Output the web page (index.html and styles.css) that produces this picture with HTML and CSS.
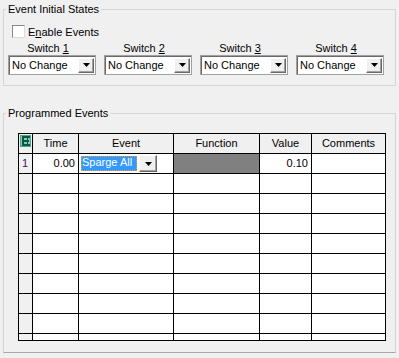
FILE: index.html
```html
<!DOCTYPE html>
<html lang="en">

<head>
    <meta charset="UTF-8" />
    <title>Event Settings</title>
    <link rel="stylesheet" href="styles.css">
</head>

<body>
    <fieldset class="group group-initial">
        <legend>Event Initial States</legend>
        <label class="check-row"><span class="checkbox"></span>E<u>n</u>able Events</label>

        <div class="switches">
            <div class="switch">
                <div class="switch-label">Switch <u>1</u></div>
                <div class="combo"><span class="combo-text">No Change</span><span class="combo-btn"><svg width="7" height="4" viewBox="0 0 7 4"><polygon points="0,0 7,0 3.5,4" fill="#000"/></svg></span></div>
            </div>
            <div class="switch">
                <div class="switch-label">Switch <u>2</u></div>
                <div class="combo"><span class="combo-text">No Change</span><span class="combo-btn"><svg width="7" height="4" viewBox="0 0 7 4"><polygon points="0,0 7,0 3.5,4" fill="#000"/></svg></span></div>
            </div>
            <div class="switch">
                <div class="switch-label">Switch <u>3</u></div>
                <div class="combo"><span class="combo-text">No Change</span><span class="combo-btn"><svg width="7" height="4" viewBox="0 0 7 4"><polygon points="0,0 7,0 3.5,4" fill="#000"/></svg></span></div>
            </div>
            <div class="switch">
                <div class="switch-label">Switch <u>4</u></div>
                <div class="combo"><span class="combo-text">No Change</span><span class="combo-btn"><svg width="7" height="4" viewBox="0 0 7 4"><polygon points="0,0 7,0 3.5,4" fill="#000"/></svg></span></div>
            </div>
        </div>
    </fieldset>

    <fieldset class="group group-events">
        <legend>Programmed Events</legend>

        <div class="grid">
            <!-- header row -->
            <div class="cell head corner">
                <svg width="11" height="12" viewBox="0 0 11 12">
                    <rect x="0" y="0" width="11" height="12" fill="#43a98f"/>
                    <rect x="1" y="1" width="9" height="10" fill="#7fcbb4"/>
                    <rect x="2" y="1" width="2" height="10" fill="#135348"/>
                    <rect x="2" y="1" width="8" height="2" fill="#135348"/>
                    <rect x="2" y="5" width="7" height="2" fill="#135348"/>
                    <rect x="2" y="9" width="8" height="2" fill="#135348"/>
                    <rect x="7" y="3" width="1" height="6" fill="#135348"/>
                </svg>
            </div>
            <div class="cell head">Time</div>
            <div class="cell head">Event</div>
            <div class="cell head">Function</div>
            <div class="cell head">Value</div>
            <div class="cell head">Comments</div>

            <!-- row 1 -->
            <div class="cell rowhead num">1</div>
            <div class="cell right">0.00</div>
            <div class="cell">
                <div class="cell-combo">
                    <span class="cell-combo-text">Sparge All</span>
                    <span class="combo-btn"><svg width="7" height="4" viewBox="0 0 7 4"><polygon points="0,0 7,0 3.5,4" fill="#000"/></svg></span>
                </div>
            </div>
            <div class="cell disabled"></div>
            <div class="cell right">0.10</div>
            <div class="cell"></div>

            <!-- empty rows -->
            <div class="cell rowhead"></div><div class="cell"></div><div class="cell"></div><div class="cell"></div><div class="cell"></div><div class="cell"></div>
            <div class="cell rowhead"></div><div class="cell"></div><div class="cell"></div><div class="cell"></div><div class="cell"></div><div class="cell"></div>
            <div class="cell rowhead"></div><div class="cell"></div><div class="cell"></div><div class="cell"></div><div class="cell"></div><div class="cell"></div>
            <div class="cell rowhead"></div><div class="cell"></div><div class="cell"></div><div class="cell"></div><div class="cell"></div><div class="cell"></div>
            <div class="cell rowhead"></div><div class="cell"></div><div class="cell"></div><div class="cell"></div><div class="cell"></div><div class="cell"></div>
            <div class="cell rowhead"></div><div class="cell"></div><div class="cell"></div><div class="cell"></div><div class="cell"></div><div class="cell"></div>
            <div class="cell rowhead"></div><div class="cell"></div><div class="cell"></div><div class="cell"></div><div class="cell"></div><div class="cell"></div>
            <div class="cell rowhead"></div><div class="cell"></div><div class="cell"></div><div class="cell"></div><div class="cell"></div><div class="cell"></div>
            <div class="cell rowhead"></div><div class="cell"></div><div class="cell"></div><div class="cell"></div><div class="cell"></div><div class="cell"></div>
        </div>
    </fieldset>
</body>

</html>
```

FILE: styles.css
```css
body {
    margin: 0;
    padding: 3px 3px 0 3px;
    background-color: #f0f0f0;
    font-family: "Liberation Sans", Arial, sans-serif;
    font-size: 11px;
    color: #000;
}

u {
    text-underline-offset: 1px;
}

/* group boxes */
.group {
    margin: 0;
    padding: 0 0 0 2px;
    border: 1px solid #d5d5d5;
    min-width: 0;
}

.group legend {
    padding: 0 2px;
    line-height: 13px;
}

.group-initial {
    padding-bottom: 10px;
}

.group-events {
    margin-top: 21px;
    padding-bottom: 11px;
    border-bottom-color: #a9a9a9;
}

/* checkbox row */
.check-row {
    display: flex;
    align-items: center;
    height: 13px;
    margin: 9px 0 0 6px;
}

.checkbox {
    width: 13px;
    height: 13px;
    box-sizing: border-box;
    margin-right: 3px;
    background: #fff;
    border: 1px solid;
    border-color: #8a8a8a #dcdcdc #dcdcdc #8a8a8a;
}

/* switch dropdowns */
.switches {
    display: flex;
    gap: 8px;
    margin: 3px 0 0 2px;
}

.switch {
    width: 88px;
}

.switch-label {
    line-height: 14px;
    text-align: center;
    padding-right: 8px;
}

.combo {
    display: flex;
    align-items: center;
    height: 20px;
    box-sizing: border-box;
    background: #fff;
    border: 1px solid #a0a0a0;
    box-shadow: inset 1px 1px 0 #696969;
}

.combo-text {
    flex: 1;
    padding-left: 3px;
}

.combo-btn {
    display: flex;
    align-items: center;
    justify-content: center;
    width: 16px;
    height: 15px;
    box-sizing: border-box;
    margin-right: 1px;
    background: #f0f0f0;
    border: 1px solid;
    border-color: #fff #696969 #696969 #fff;
    box-shadow: inset -1px -1px 0 #a0a0a0;
}

/* event grid */
.grid {
    display: grid;
    grid-template-columns: 13px 45px 94px 85px 51px 73px;
    grid-template-rows: repeat(10, 19px) 6px;
    gap: 1px;
    width: max-content;
    margin: 13px 0 0 12px;
    background: #000;
    border: 1px solid #000;
}

.cell {
    background: #fff;
    line-height: 19px;
    overflow: hidden;
}

.head {
    background: #f0f0f0;
    text-align: center;
}

.corner {
    padding: 1px 0 0 1px;
    line-height: 0;
    text-align: left;
}

.rowhead {
    background: #f0f0f0;
}

.num {
    padding-left: 3px;
    color: #4a0a5a;
}

.right {
    text-align: right;
    padding-right: 3px;
}

.disabled {
    background: #808080;
}

.cell-combo {
    display: flex;
    align-items: center;
    width: 78px;
    height: 17px;
    margin: 1px 0 0 1px;
    background: #fff;
}

.cell-combo-text {
    width: 56px;
    height: 15px;
    box-sizing: border-box;
    margin: 0 2px 0 1px;
    padding-left: 1px;
    line-height: 13px;
    background: #3399ff;
    color: #fff;
    outline: 1px dotted #f0a030;
    outline-offset: -1px;
}

.cell-combo .combo-btn {
    width: 18px;
    height: 17px;
}
```
